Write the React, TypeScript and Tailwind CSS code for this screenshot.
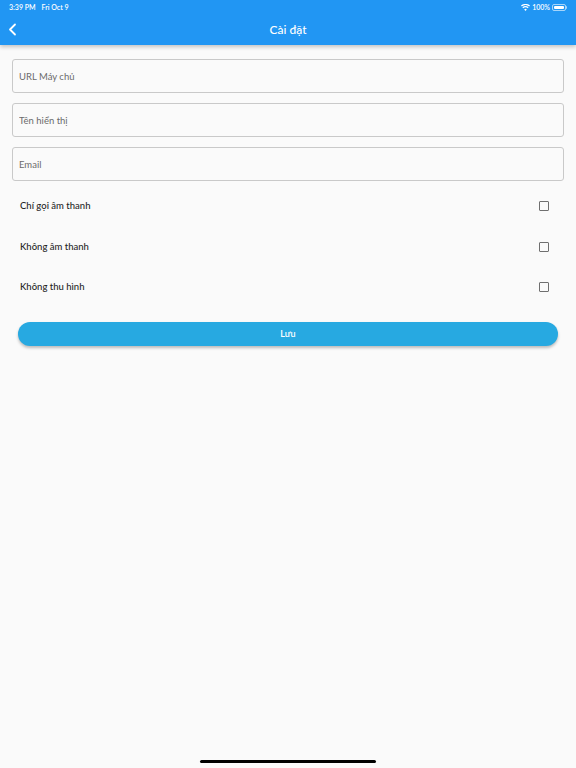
import React from "react";

function Wifi() {
  return (
    <svg width="9" height="7" viewBox="0 0 18 14" fill="white">
      <path d="M9 14l2.6-3.2a4 4 0 0 0-5.2 0L9 14z" />
      <path d="M4.4 8.4a7 7 0 0 1 9.2 0l1.6-2a9.6 9.6 0 0 0-12.4 0l1.6 2z" />
      <path d="M1.6 5a11.4 11.4 0 0 1 14.8 0L18 3A14 14 0 0 0 0 3l1.6 2z" />
    </svg>
  );
}

function Battery() {
  return (
    <div className="flex items-center">
      <div className="w-[14px] h-[7px] rounded-[2px] border border-white/60 p-[1px]">
        <div className="w-full h-full bg-white rounded-[1px]" />
      </div>
      <div className="w-[1px] h-[3px] bg-white/60 rounded-r-sm" />
    </div>
  );
}

function Field({ placeholder }: { placeholder: string }) {
  return (
    <input
      placeholder={placeholder}
      className="w-full h-[34px] rounded-[3px] border border-[#c9c9c9] bg-[#fafafa] px-[6px] text-[9.5px] text-[#333] placeholder:text-[#6b6b6b] focus:outline-none"
    />
  );
}

function CheckRow({ label }: { label: string }) {
  return (
    <div className="flex items-center justify-between h-[40.5px] pl-[20px] pr-[27px]">
      <span className="text-[9.5px] font-medium text-[#262626]">{label}</span>
      <div className="w-[10px] h-[10px] border-[1.5px] border-[#6f6f6f] rounded-[1px]" />
    </div>
  );
}

export default function App() {
  return (
    <div className="relative w-[576px] h-[768px] bg-[#fafafa] overflow-hidden" style={{ fontFamily: "Lato, 'Noto Sans', sans-serif" }}>
      <header className="bg-[#2196f3] h-[45px] shadow-[0_2px_4px_rgba(0,0,0,0.22)] text-white">
        <div className="flex items-center justify-between h-[14px] px-[9px] text-[7px] font-semibold">
          <div className="flex gap-[6px]">
            <span>3:39 PM</span>
            <span>Fri Oct 9</span>
          </div>
          <div className="flex items-center gap-[2px]">
            <Wifi />
            <span>100%</span>
            <Battery />
          </div>
        </div>
        <div className="relative flex items-center justify-center h-[31px]">
          <svg className="absolute left-[8px] top-[9px]" width="9" height="13" viewBox="0 0 9 13" fill="none" stroke="white" strokeWidth="1.8" strokeLinecap="round" strokeLinejoin="round">
            <path d="M7 1.5L2 6.5l5 5" />
          </svg>
          <span className="text-[12px] font-medium">Cài đặt</span>
        </div>
      </header>

      <div className="flex flex-col gap-[10px] px-[12px] pt-[14px]">
        <Field placeholder="URL Máy chủ" />
        <Field placeholder="Tên hiển thị" />
        <Field placeholder="Email" />
      </div>

      <div className="flex flex-col pt-[5px]">
        <CheckRow label="Chí gọi âm thanh" />
        <CheckRow label="Không âm thanh" />
        <CheckRow label="Không thu hình" />
      </div>

      <div className="flex px-[18px] pt-[14px]">
        <button className="w-full h-[24px] rounded-full bg-[#27a9e1] text-white text-[9px] font-semibold shadow-[0_2px_3px_rgba(0,0,0,0.25)]">
          Lưu
        </button>
      </div>

      <div className="absolute left-[200px] top-[760px] w-[176px] h-[3px] rounded-full bg-black" />
    </div>
  );
}
